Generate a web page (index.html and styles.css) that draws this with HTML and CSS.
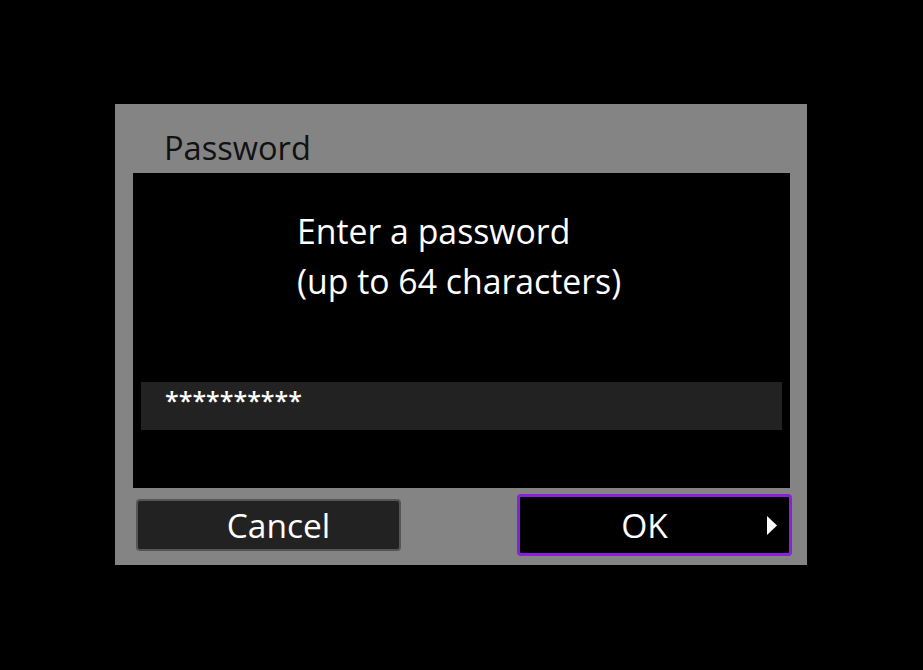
FILE: index.html
```html
<!DOCTYPE html>
<html lang="en">
<head>
    <meta charset="UTF-8">
    <meta name="viewport" content="width=device-width, initial-scale=1.0">
    <title>Password</title>
    <link rel="stylesheet" href="styles.css">
</head>
<body>
    <div class="dialog">
        <div class="dialog-title">Password</div>

        <div class="dialog-body">
            <p class="prompt">Enter a password<br>(up to 64 characters)</p>
            <div class="password-field">**********</div>
        </div>

        <div class="dialog-buttons">
            <button class="btn btn-cancel">Cancel</button>
            <button class="btn btn-ok">
                OK
                <svg class="arrow" width="10" height="19" viewBox="0 0 10 19">
                    <path d="M0 0 L10 9.5 L0 19 Z" fill="#fff"/>
                </svg>
            </button>
        </div>
    </div>
</body>
</html>
```

FILE: styles.css
```css
* {
    margin: 0;
    padding: 0;
    box-sizing: border-box;
    font-family: 'Open Sans', 'DejaVu Sans', sans-serif;
}

body {
    width: 923px;
    height: 670px;
    background: #000;
    overflow: hidden;
    padding-top: 104px;
    padding-left: 115px;
}

.dialog {
    width: 692px;
    height: 461px;
    background: #848484;
    display: flex;
    flex-direction: column;
}

.dialog-title {
    height: 69px;
    padding-left: 49px;
    padding-top: 24px;
    font-size: 32.6px;
    line-height: 40px;
    color: #111;
}

.dialog-body {
    margin-left: 18px;
    width: 657px;
    height: 315px;
    background: #000;
    display: flex;
    flex-direction: column;
}

.prompt {
    padding-left: 164px;
    padding-top: 33px;
    font-size: 33.8px;
    line-height: 50px;
    color: #fff;
}

.password-field {
    margin: 76px 8px 0;
    height: 48px;
    background: #222;
    color: #fff;
    font-size: 25px;
    line-height: 36px;
    padding-left: 24px;
    font-weight: 600;
}

.dialog-buttons {
    flex: 1;
    display: flex;
    justify-content: space-between;
    align-items: center;
    padding-left: 21px;
    padding-right: 15px;
    padding-bottom: 3px;
}

.btn {
    height: 52px;
    border-radius: 4px;
    color: #fff;
    font-size: 33.5px;
    cursor: pointer;
    position: relative;
}

.btn-cancel {
    width: 265px;
    background: #222;
    border: 2px solid #555;
    padding-left: 20px;
}

.btn-ok {
    width: 275px;
    height: 62px;
    background: #000;
    border: 3px solid #8a20d8;
    padding-right: 20px;
}

.arrow {
    position: absolute;
    right: 12px;
    top: 19px;
}
```
